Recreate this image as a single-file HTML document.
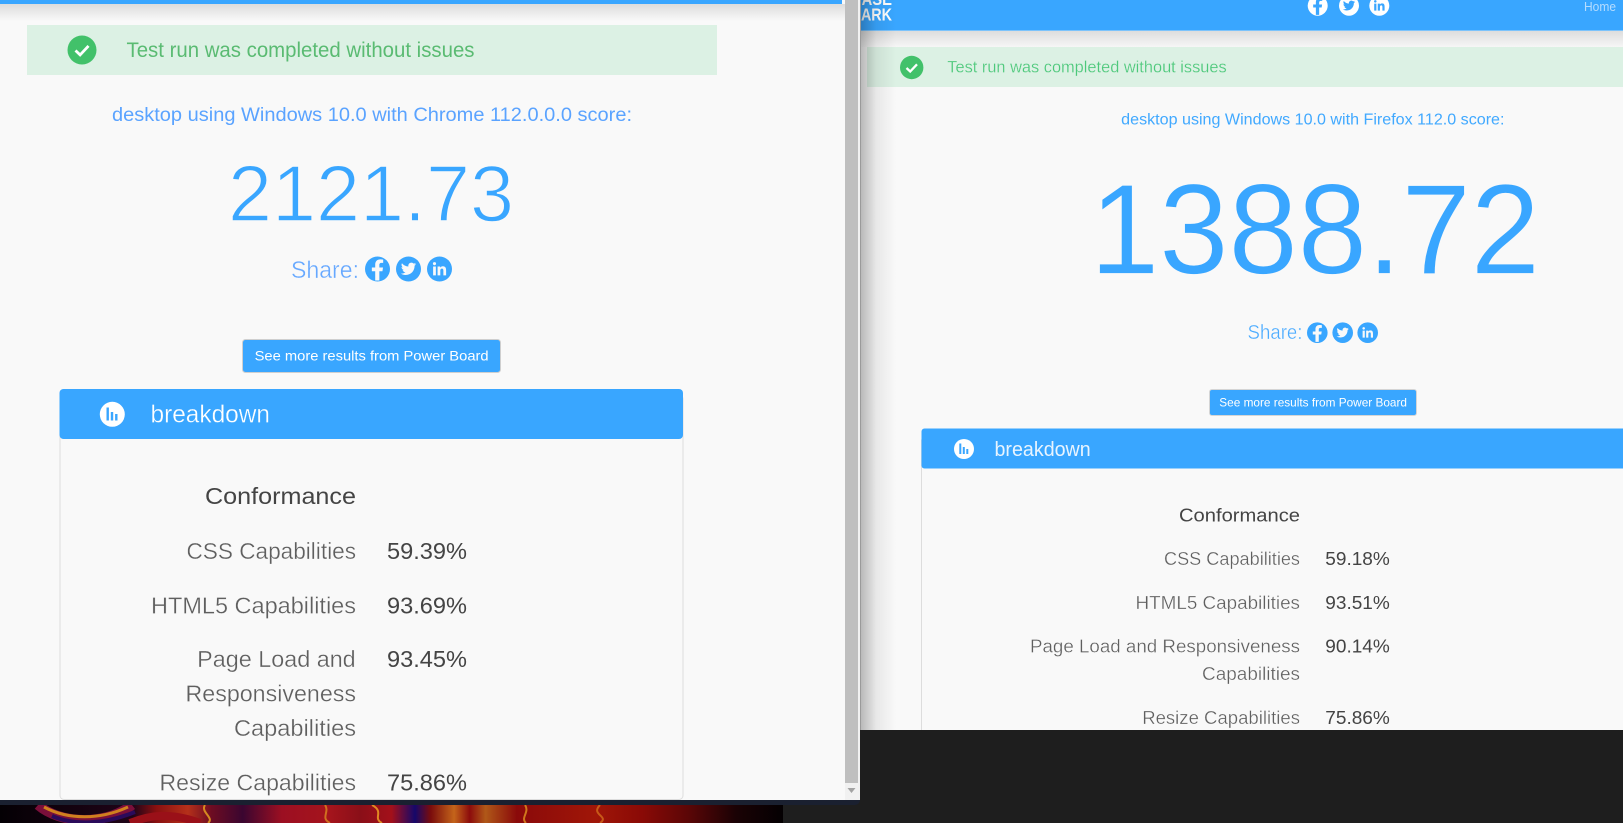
<!DOCTYPE html>
<html lang="en">
<head>
<meta charset="utf-8">
<title>Test results</title>
<style>
html,body{margin:0;padding:0;width:1623px;height:823px;overflow:hidden;background:#1e1e1e}
svg{display:block}
text{font-family:"Liberation Sans",Arial,sans-serif;white-space:pre}
.light{stroke:#f9f9f9;stroke-width:.35px}
.lab{fill:#5f5f5f;stroke:#f9f9f9;stroke-width:.3px}
.val{fill:#444}
</style>
</head>
<body>
<svg width="1623" height="823" viewBox="0 0 1623 823" xmlns="http://www.w3.org/2000/svg">
<defs>
  <linearGradient id="topShadow" x1="0" y1="0" x2="0" y2="1"><stop offset="0" stop-color="#dcdcdc"/><stop offset="1" stop-color="#f9f9f9"/></linearGradient>
  <linearGradient id="topShadow2" x1="0" y1="0" x2="0" y2="1"><stop offset="0" stop-color="#dddddd"/><stop offset="1" stop-color="#f6f6f6"/></linearGradient>
  <linearGradient id="sideShadow" x1="0" y1="0" x2="1" y2="0"><stop offset="0" stop-color="#000" stop-opacity=".27"/><stop offset=".45" stop-color="#000" stop-opacity=".07"/><stop offset="1" stop-color="#000" stop-opacity="0"/></linearGradient>
  <linearGradient id="wall" x1="0" y1="0" x2="1" y2="0">
    <stop offset="0" stop-color="#040004"/><stop offset=".17" stop-color="#200418"/>
    <stop offset=".2" stop-color="#8a1010"/><stop offset=".24" stop-color="#b5301a"/>
    <stop offset=".27" stop-color="#6d0c22"/><stop offset=".31" stop-color="#3a0630"/>
    <stop offset=".36" stop-color="#9c0f22"/><stop offset=".42" stop-color="#a5141c"/>
    <stop offset=".46" stop-color="#8a0f18"/><stop offset=".5" stop-color="#a3101a"/>
    <stop offset=".53" stop-color="#15086a"/><stop offset=".55" stop-color="#7a0c0c"/>
    <stop offset=".58" stop-color="#c4641a"/><stop offset=".6" stop-color="#8c0c0c"/>
    <stop offset=".62" stop-color="#b05818"/><stop offset=".66" stop-color="#8a0a0a"/>
    <stop offset=".76" stop-color="#a01608"/><stop offset=".82" stop-color="#8a0a06"/>
    <stop offset=".88" stop-color="#5a0606"/><stop offset=".94" stop-color="#1a0205"/><stop offset="1" stop-color="#040002"/>
  </linearGradient>
  <clipPath id="rightClip"><rect x="860" y="0" width="763" height="730"/></clipPath>
  <clipPath id="leftPanel"><rect x="0" y="0" width="860" height="800"/></clipPath>
  <clipPath id="wallClip"><rect x="0" y="805" width="783" height="18"/></clipPath>
  <g id="f"><path transform="translate(-6.6,-10.6) scale(.0413)" d="M279.14 288l14.22-92.66h-88.91v-60.13c0-25.35 12.42-50.06 52.24-50.06h40.42V6.26S260.43 0 225.36 0c-73.22 0-121.08 44.38-121.08 124.72v70.62H22.89V288h81.39v224h100.17V288z"/></g>
  <g id="t"><path transform="translate(-7.6,-7.8) scale(.0297)" d="M459.37 151.716c.325 4.548.325 9.097.325 13.645 0 138.72-105.583 298.558-298.558 298.558-59.452 0-114.68-17.219-161.137-47.106 8.447.974 16.568 1.299 25.34 1.299 49.055 0 94.213-16.568 130.274-44.832-46.132-.975-84.792-31.188-98.112-72.772 6.498.974 12.995 1.624 19.818 1.624 9.421 0 18.843-1.3 27.614-3.573-48.081-9.747-84.143-51.98-84.143-102.985v-1.299c13.969 7.797 30.214 12.67 47.431 13.319-28.264-18.843-46.781-51.005-46.781-87.391 0-19.492 5.197-37.36 14.294-52.954 51.655 63.675 129.3 105.258 216.365 109.807-1.624-7.797-2.599-15.918-2.599-24.04 0-57.828 46.782-104.934 104.934-104.934 30.213 0 57.502 12.67 76.67 33.137 23.715-4.548 46.456-13.32 66.599-25.34-7.798 24.366-24.366 44.833-46.132 57.827 21.117-2.273 41.584-8.122 60.426-16.243-14.292 20.791-32.161 39.308-52.628 54.253z"/></g>
  <g id="l"><path transform="translate(-6.6,-7.4) scale(.0295)" d="M100.28 448H7.4V148.9h92.88zM53.79 108.1C24.09 108.1 0 83.5 0 53.8a53.79 53.79 0 0 1 107.58 0c0 29.7-24.09 54.3-53.79 54.3zM447.9 448h-92.68V302.4c0-34.7-.7-79.2-48.29-79.2-48.29 0-55.69 37.7-55.69 76.7V448h-92.78V148.9h89.08v40.8h1.3c12.4-23.1 42.69-48.3 87.88-48.3 94 0 111.28 61.9 111.28 142.3V448z"/></g>
</defs>

<!-- backdrop -->
<rect width="1623" height="823" fill="#1e1e1e"/>
<rect x="0" y="805" width="783" height="18" fill="url(#wall)"/>
<g clip-path="url(#wallClip)" fill="none">
  <path d="M38 805C60 824 105 826 132 805" stroke="#7a0f3a" stroke-width="10"/>
  <path d="M44 807C68 820 100 820 128 807" stroke="#d0801f" stroke-width="3"/>
  <path d="M52 816C75 826 105 824 135 812" stroke="#2a0a5a" stroke-width="4"/>
  <path d="M130 823C150 815 170 812 200 823" stroke="#9a1018" stroke-width="8"/>
  <path d="M205 805C200 812 215 818 208 823" stroke="#d58a20" stroke-width="2"/>
  <path d="M325 805C330 812 320 818 330 823" stroke="#d0701f" stroke-width="2"/>
  <path d="M372 805C385 812 372 818 382 823" stroke="#e08a22" stroke-width="2"/>
  <path d="M525 805C530 812 520 818 526 823" stroke="#d0781c" stroke-width="2"/>
  <path d="M600 805C590 815 610 816 600 823" stroke="#c85a18" stroke-width="2"/>
</g>
<path d="M0 800H860V800a5 5 0 0 1-5 5H0z" fill="#1a2030"/>

<!-- LEFT WINDOW -->
<g clip-path="url(#leftPanel)">
  <rect width="860" height="800" fill="#f9f9f9"/>
  <rect x="0" y="4" width="845" height="17" fill="url(#topShadow)"/>
  <rect x="0" y="0" width="842" height="4" fill="#39a6ff"/>

  <rect x="27" y="25" width="690" height="50" fill="#dcf1e4"/>
  <circle cx="82" cy="50" r="14.5" fill="#42c16a"/>
  <path d="M75.5 50.5l4.6 4.4 8.4-9" fill="none" stroke="#fff" stroke-width="2.8"/>
  <text x="126.500" y="57" font-size="21.5" textLength="348" lengthAdjust="spacingAndGlyphs" fill="#5abb72">Test run was completed without issues</text>

  <text x="112" y="121" font-size="19.5" textLength="520" lengthAdjust="spacingAndGlyphs" fill="#5aa3ff">desktop using Windows 10.0 with Chrome 112.0.0.0 score:</text>
  <text x="228" y="221" font-size="80" textLength="286" lengthAdjust="spacingAndGlyphs" fill="#39a6ff" stroke="#f9f9f9" stroke-width="1.5">2121.73</text>
  <text x="291" y="278" font-size="24" textLength="68" lengthAdjust="spacingAndGlyphs" fill="#66a8ff" class="light">Share:</text>

  <circle cx="377.5" cy="269" r="12.5" fill="#39a6ff"/><use href="#f" x="377.5" y="270" fill="#f9f9f9"/>
  <circle cx="408.5" cy="269" r="12.5" fill="#39a6ff"/><use href="#t" x="408.5" y="269" fill="#f9f9f9"/>
  <circle cx="439.5" cy="269" r="12.5" fill="#39a6ff"/><use href="#l" x="439.5" y="269.5" fill="#f9f9f9"/>

  <rect x="242.5" y="339.5" width="258" height="33" rx="3" fill="#39a6ff" stroke="#cfcfcf"/>
  <text x="254.6" y="360.5" font-size="14" textLength="234" lengthAdjust="spacingAndGlyphs" fill="#fff">See more results from Power Board</text>

  <rect x="60" y="395" width="623" height="404.5" rx="4" fill="#f9f9f9" stroke="#dddddd"/>
  <path d="M63.500 389H679a4 4 0 0 1 4 4V435a4 4 0 0 1-4 4H63.500a4 4 0 0 1-4-4V393a4 4 0 0 1 4-4z" fill="#39a6ff"/>
  <circle cx="112.3" cy="414.3" r="12.5" fill="#fff"/>
  <path d="M106.5 407.5h2.4v13h-2.4zM110.8 412h2.4v8.500h-2.400zM115.100 414h2.400v6.500h-2.400z" fill="#39a6ff"/>
  <text x="150.500" y="422.700" font-size="25" textLength="119.500" lengthAdjust="spacingAndGlyphs" fill="#fff" stroke="#39a6ff" stroke-width=".3">breakdown</text>

  <text x="205" y="504" font-size="23" textLength="151" lengthAdjust="spacingAndGlyphs" fill="#444">Conformance</text>
  <text x="186.500" y="559" font-size="23" textLength="169.500" lengthAdjust="spacingAndGlyphs" class="lab">CSS Capabilities</text>
  <text x="387" y="559" font-size="23" textLength="80" lengthAdjust="spacingAndGlyphs" class="val">59.39%</text>
  <text x="151" y="613.300" font-size="23" textLength="205" lengthAdjust="spacingAndGlyphs" class="lab">HTML5 Capabilities</text>
  <text x="387" y="613.300" font-size="23" textLength="80" lengthAdjust="spacingAndGlyphs" class="val">93.69%</text>
  <text x="197.200" y="667" font-size="23" textLength="158.500" lengthAdjust="spacingAndGlyphs" class="lab">Page Load and</text>
  <text x="387" y="667" font-size="23" textLength="80" lengthAdjust="spacingAndGlyphs" class="val">93.45%</text>
  <text x="185.500" y="701.500" font-size="23" textLength="170.500" lengthAdjust="spacingAndGlyphs" class="lab">Responsiveness</text>
  <text x="234" y="736" font-size="23" textLength="122" lengthAdjust="spacingAndGlyphs" class="lab">Capabilities</text>
  <text x="159.500" y="790.300" font-size="23" textLength="196.500" lengthAdjust="spacingAndGlyphs" class="lab">Resize Capabilities</text>
  <text x="387" y="790.300" font-size="23" textLength="80" lengthAdjust="spacingAndGlyphs" class="val">75.86%</text>

  <!-- scrollbar -->
  <rect x="845" y="0" width="15" height="800" fill="#f1f1f1"/>
  <rect x="845" y="0" width="13" height="783" fill="#bfbfbf"/>
  <path d="M847.500 788h8l-4 5z" fill="#a3a3a3"/>
</g>

<!-- RIGHT WINDOW -->
<g clip-path="url(#rightClip)">
  <rect x="860" y="0" width="763" height="730" fill="#f9f9f9"/>
  <rect x="860" y="31" width="763" height="16" fill="url(#topShadow2)"/>
  <rect x="860" y="0" width="763" height="30" fill="#39a6ff"/>
  <rect x="860" y="30" width="763" height="1" fill="#7cc3fb"/>
  <text x="851" y="5" font-size="17.500" font-weight="700" fill="#fff" textLength="41" lengthAdjust="spacingAndGlyphs">BASE</text>
  <text x="849" y="20.700" font-size="17.500" font-weight="700" fill="#fff" textLength="43" lengthAdjust="spacingAndGlyphs">MARK</text>

  <circle cx="1317.700" cy="5.700" r="10" fill="#fff"/><use href="#f" transform="translate(1317.700,6.500) scale(.8)" fill="#39a6ff"/>
  <circle cx="1349" cy="5.700" r="10" fill="#fff"/><use href="#t" transform="translate(1349,5.700) scale(.8)" fill="#39a6ff"/>
  <circle cx="1379.300" cy="5.700" r="10" fill="#fff"/><use href="#l" transform="translate(1379.300,6) scale(.8)" fill="#39a6ff"/>
  <text x="1584" y="11" font-size="12.500" textLength="32" lengthAdjust="spacingAndGlyphs" fill="#b5dcff">Home</text>

  <rect x="867" y="47" width="756" height="40" fill="#dcf1e4"/>
  <circle cx="911.700" cy="67.500" r="11.700" fill="#42c16a"/>
  <path d="M906.500 68l3.700 3.500 6.800-7.200" fill="none" stroke="#fff" stroke-width="2.300"/>
  <text x="947.300" y="72.700" font-size="17" textLength="279.400" lengthAdjust="spacingAndGlyphs" fill="#4cc87a" class="light" style="stroke:#dcf1e4;stroke-width:.2px">Test run was completed without issues</text>

  <text x="1121.200" y="124.300" font-size="15.500" textLength="383.300" lengthAdjust="spacingAndGlyphs" fill="#41a9ff">desktop using Windows 10.0 with Firefox 112.0 score:</text>
  <text x="1090" y="273.300" font-size="128" textLength="450" lengthAdjust="spacingAndGlyphs" fill="#39a6ff" stroke="#f9f9f9" stroke-width=".8">1388.72</text>
  <text x="1247.500" y="338.800" font-size="20" textLength="55" lengthAdjust="spacingAndGlyphs" fill="#4aabff" class="light">Share:</text>

  <circle cx="1317.300" cy="332.700" r="10.300" fill="#39a6ff"/><use href="#f" transform="translate(1317.300,333.500) scale(.8)" fill="#f9f9f9"/>
  <circle cx="1342.700" cy="332.700" r="10.300" fill="#39a6ff"/><use href="#t" transform="translate(1342.700,332.700) scale(.8)" fill="#f9f9f9"/>
  <circle cx="1367.700" cy="332.700" r="10.300" fill="#39a6ff"/><use href="#l" transform="translate(1367.700,333) scale(.8)" fill="#f9f9f9"/>

  <rect x="1209.500" y="389.500" width="207" height="26" rx="2.500" fill="#39a6ff" stroke="#d5d5d5"/>
  <text x="1219.300" y="406.700" font-size="12" textLength="187.700" lengthAdjust="spacingAndGlyphs" fill="#fff">See more results from Power Board</text>

  <rect x="921.500" y="440" width="720" height="320" fill="#f9f9f9" stroke="#dddddd"/>
  <path d="M924.500 428.500H1640V468.500H924.500a3 3 0 0 1-3-3V431.500a3 3 0 0 1 3-3z" fill="#39a6ff"/>
  <circle cx="964" cy="449" r="10" fill="#fff"/>
  <path d="M959.300 443.500h2v10.500h-2zM962.800 447h2v7h-2zM966.300 449h2v5h-2z" fill="#39a6ff"/>
  <text x="994.500" y="456" font-size="20" textLength="96.200" lengthAdjust="spacingAndGlyphs" fill="#e8f4ff">breakdown</text>

  <text x="1179" y="521.700" font-size="18.500" textLength="121" lengthAdjust="spacingAndGlyphs" fill="#444">Conformance</text>
  <text x="1164" y="565" font-size="18.500" textLength="136" lengthAdjust="spacingAndGlyphs" class="lab">CSS Capabilities</text>
  <text x="1325.300" y="565" font-size="18.500" textLength="64.500" lengthAdjust="spacingAndGlyphs" class="val">59.18%</text>
  <text x="1135.500" y="609" font-size="18.500" textLength="164.500" lengthAdjust="spacingAndGlyphs" class="lab">HTML5 Capabilities</text>
  <text x="1325.300" y="609" font-size="18.500" textLength="64.500" lengthAdjust="spacingAndGlyphs" class="val">93.51%</text>
  <text x="1030" y="652.700" font-size="18.500" textLength="270" lengthAdjust="spacingAndGlyphs" class="lab">Page Load and Responsiveness</text>
  <text x="1325.300" y="652.700" font-size="18.500" textLength="64.500" lengthAdjust="spacingAndGlyphs" class="val">90.14%</text>
  <text x="1202" y="680" font-size="18.500" textLength="98" lengthAdjust="spacingAndGlyphs" class="lab">Capabilities</text>
  <text x="1142.200" y="724" font-size="18.500" textLength="157.800" lengthAdjust="spacingAndGlyphs" class="lab">Resize Capabilities</text>
  <text x="1325.300" y="724" font-size="18.500" textLength="64.500" lengthAdjust="spacingAndGlyphs" class="val">75.86%</text>

  <rect x="860" y="0" width="36" height="730" fill="url(#sideShadow)"/>
  <rect x="860" y="0" width="1" height="730" fill="#9a9a9a"/>
</g>
</svg>
</body>
</html>
